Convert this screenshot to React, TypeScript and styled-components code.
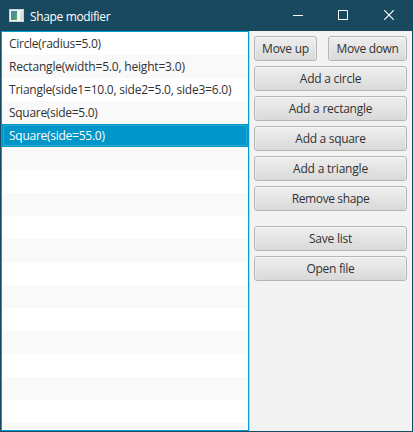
import React from "react";
import styled, { createGlobalStyle } from "styled-components";

const GlobalStyle = createGlobalStyle`
  * { box-sizing: border-box; }
  html, body { margin: 0; height: 100%; overflow: hidden; }
  body { font-family: "Open Sans", "Noto Sans", sans-serif; font-size: 12px; color: #323232; }
  #root { height: 100%; }
`;

const Window = styled.div`
  width: 413px;
  height: 432px;
  display: flex;
  flex-direction: column;
  background: #18495f;
`;

const TitleBar = styled.header`
  height: 31px;
  flex: none;
  display: flex;
  align-items: center;
  padding: 0 3px 1px 9px;
  color: #fff;
`;

const Title = styled.span<{ $spacing: number }>`
  flex: 1;
  margin-left: 6px;
  padding-top: 2px;
  line-height: 29px;
  letter-spacing: ${(p) => p.$spacing}px;
`;

const WindowButton = styled.button`
  width: 45px;
  height: 30px;
  padding: 0;
  border: 0;
  background: none;
  display: flex;
  align-items: center;
  justify-content: center;

  &:last-child {
    width: 46px;
    padding-left: 1px;
  }
`;

const Controls = styled.div`
  display: flex;
  margin-right: -1px;
`;

const Body = styled.main`
  flex: 1;
  display: flex;
  margin: 0 1px 1px;
  min-height: 0;
  background: #f3f3f3;
`;

const List = styled.ul`
  width: 248px;
  margin: 0;
  padding: 0;
  list-style: none;
  border: 1px solid #039ed3;
  box-shadow: 1px 0 #b3dcea;
  overflow: hidden;
  background: #fff;
`;

const Row = styled.li<{ $selected: boolean; $spacing: number }>`
  height: 23px;
  padding-left: 7px;
  line-height: 24px;
  white-space: pre;
  letter-spacing: ${(p) => p.$spacing}px;
  color: ${(p) => (p.$selected ? "#fff" : "#323232")};
  background: ${(p) => (p.$selected ? "#0096c9" : "#fff")};
  outline: ${(p) => (p.$selected ? "1px solid #2ba9d4" : "none")};
  outline-offset: -2px;

  &:nth-child(even) {
    background: #f9f9f9;
  }
`;

const Panel = styled.section`
  flex: 1;
  display: flex;
  flex-direction: column;
  gap: 5px;
  padding: 5px;
`;

const ButtonRow = styled.div`
  display: flex;
  justify-content: space-between;
`;

const Group = styled.div`
  display: flex;
  flex-direction: column;
  gap: 5px;

  & + & {
    margin-top: 10px;
  }
`;

const Button = styled.button<{ $width: number; $spacing: number }>`
  width: ${(p) => p.$width}px;
  height: 25px;
  padding: 1px 0 0;
  border: 1px solid #b5b5b5;
  border-radius: 3px;
  background: linear-gradient(#efefef, #d9d9d9);
  box-shadow: inset 0 1px #f8f8f8, inset 1px 0 #ececec, inset -1px 0 #ececec;
  font: inherit;
  line-height: 22px;
  color: #323232;
  white-space: nowrap;
  letter-spacing: ${(p) => p.$spacing}px;
`;

const AppIcon = () => (
  <svg width="15" height="13" viewBox="0 0 15 13">
    <defs>
      <linearGradient id="screen" x1="0" y1="0" x2="1" y2="1">
        <stop offset="0" stopColor="#4d7fae" />
        <stop offset="0.6" stopColor="#4b9a82" />
        <stop offset="1" stopColor="#69ad72" />
      </linearGradient>
    </defs>
    <rect width="15" height="13" fill="#c9d0d4" />
    <rect x="1" y="1" width="13" height="11" fill="#f4f5f5" />
    <rect x="2" y="2" width="6" height="9" fill="url(#screen)" />
    <rect x="9" y="2" width="2" height="9" fill="#fff" />
    <rect x="11" y="2" width="3" height="5" fill="#dfe3e3" />
    <rect x="11" y="7" width="3" height="4" fill="#d3e2d8" />
  </svg>
);

const rows = [
  { text: "Circle(radius=5.0)", spacing: -0.28 },
  { text: "Rectangle(width=5.0, height=3.0)", spacing: -0.19 },
  { text: "Triangle(side1=10.0, side2=5.0, side3=6.0)", spacing: -0.22 },
  { text: "Square(side=5.0)", spacing: -0.29 },
  { text: "Square(side=55.0)", spacing: -0.26, selected: true },
  ...Array.from({ length: 13 }, () => ({ text: "", spacing: 0 })),
] as { text: string; spacing: number; selected?: boolean }[];

const groups = [
  [
    { text: "Add a circle", spacing: -0.25 },
    { text: "Add a rectangle", spacing: -0.23 },
    { text: "Add a square", spacing: -0.3 },
    { text: "Add a triangle", spacing: -0.2 },
    { text: "Remove shape", spacing: -0.38 },
  ],
  [
    { text: "Save list", spacing: -0.22 },
    { text: "Open file", spacing: -0.3 },
  ],
];

export default function App() {
  return (
    <>
      <GlobalStyle />
      <Window>
        <TitleBar>
          <AppIcon />
          <Title $spacing={-0.36}>Shape modifier</Title>
          <Controls>
            <WindowButton aria-label="Minimize">
              <svg width="10" height="10" stroke="#fff"><path d="M0 5.5H10" /></svg>
            </WindowButton>
            <WindowButton aria-label="Maximize">
              <svg width="10" height="10" stroke="#fff" fill="none"><path d="M.5.5h9v9h-9z" /></svg>
            </WindowButton>
            <WindowButton aria-label="Close">
              <svg width="10" height="10" stroke="#fff" strokeWidth="1.2"><path d="M.2.2l9.6 9.6M9.8.2L.2 9.8" /></svg>
            </WindowButton>
          </Controls>
        </TitleBar>
        <Body>
          <List>
            {rows.map((row, i) => (
              <Row key={i} $selected={!!row.selected} $spacing={row.spacing}>{row.text}</Row>
            ))}
          </List>
          <Panel>
            <ButtonRow>
              <Button $width={63} $spacing={-0.25}>Move up</Button>
              <Button $width={79} $spacing={-0.33}>Move down</Button>
            </ButtonRow>
            {groups.map((group, i) => (
              <Group key={i}>
                {group.map((b) => (
                  <Button key={b.text} $width={153} $spacing={b.spacing}>{b.text}</Button>
                ))}
              </Group>
            ))}
          </Panel>
        </Body>
      </Window>
    </>
  );
}
